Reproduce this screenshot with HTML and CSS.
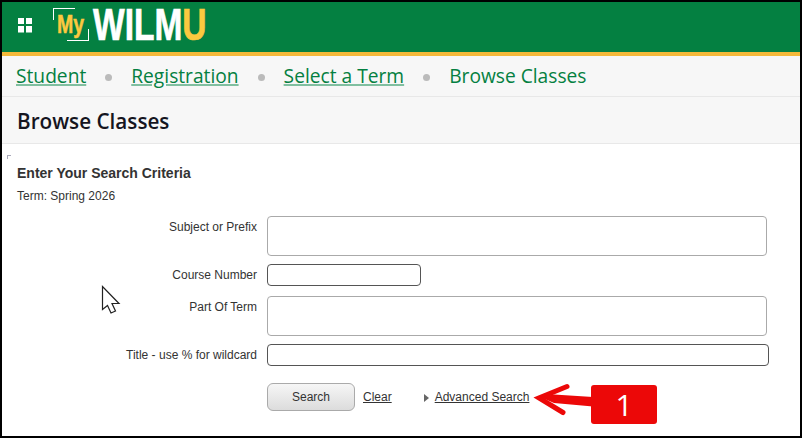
FILE: index.html
```html
<!DOCTYPE html>
<html lang="en">
<head>
<meta charset="utf-8">
<title>Browse Classes</title>
<link rel="stylesheet" href="styles.css">
</head>
<body>
<div class="frame">
  <header class="topbar">
    <svg class="grid-icon" width="14" height="15" viewBox="0 0 14 15" aria-hidden="true">
      <rect x="0" y="0" width="6" height="6" fill="#fff"/><rect x="8" y="0" width="6" height="6" fill="#fff"/>
      <rect x="0" y="8" width="6" height="6.5" fill="#fff"/><rect x="8" y="8" width="6" height="6.5" fill="#fff"/>
    </svg>
    <div class="logo">
      <div class="logo-my">
        <span class="corner corner-tl"></span>
        <span class="my">My</span>
        <span class="corner corner-br"></span>
      </div>
      <div class="wordmark"><span class="wilm">WILM</span><span class="u">U</span></div>
    </div>
  </header>
  <nav class="crumbs">
    <a href="#">Student</a><i class="dot"></i>
    <a href="#">Registration</a><i class="dot"></i>
    <a href="#">Select a Term</a><i class="dot"></i>
    <span>Browse Classes</span>
  </nav>
  <div class="titlebar"><h1>Browse Classes</h1></div>
  <main class="content">
    <span class="tick"></span>
    <h2>Enter Your Search Criteria</h2>
    <p class="term">Term: Spring 2026</p>
    <form class="form">
      <label class="lbl">Subject or Prefix</label>
      <div class="box box-subject"></div>
      <label class="lbl">Course Number</label>
      <input class="inp inp-course" type="text">
      <label class="lbl">Part Of Term</label>
      <div class="box box-part"></div>
      <label class="lbl">Title - use % for wildcard</label>
      <input class="inp inp-title" type="text">
      <div class="actions">
        <button class="btn" type="button">Search</button>
        <a class="link clear" href="#">Clear</a>
        <i class="tri"></i>
        <a class="link" href="#">Advanced Search</a>
      </div>
    </form>
  </main>
  <svg class="cursor" width="20" height="30" viewBox="0 0 20 30" aria-hidden="true">
    <path d="M1.5 1.5V24.5L6.5 20.5L10 28L14.5 26L11 18.5H18Z" fill="#fff" stroke="#222" stroke-width="1.2" stroke-linejoin="miter"/>
  </svg>
  <svg class="arrow" width="64" height="40" viewBox="0 0 64 40" aria-hidden="true">
    <path d="M35 5.5L7 17L31 31.5" fill="none" stroke="#ec0808" stroke-width="5" stroke-linecap="round" stroke-linejoin="miter"/>
    <path d="M8 16L22 13.5L61 16V25.5L22 22Z" fill="#ec0808"/>
  </svg>
  <div class="badge">1</div>
</div>
</body>
</html>
```
FILE: styles.css
```css
* { box-sizing: border-box; }
html, body { margin: 0; padding: 0; background: #fff; }
.frame {
  position: relative;
  width: 802px;
  height: 438px;
  border: 2px solid #000;
  overflow: hidden;
  background: #fff;
}
.topbar {
  height: 54px;
  background: #048041;
  border-bottom: 4px solid #f5b93a;
  display: flex;
  align-items: center;
  padding-left: 16px;
}
.grid-icon { margin-bottom: 4px; flex: none; }
.logo { display: flex; align-items: flex-start; margin-left: 21px; height: 50px; }
.logo-my { position: relative; width: 36px; height: 33px; margin: 6px 4px 0 0; flex: none; }
.my {
  position: absolute; left: 4px; top: 3px;
  font: bold 25px/26px "Liberation Sans", sans-serif;
  color: #fcc93f;
  -webkit-text-stroke: .5px #fcc93f;
  transform: scaleX(.78);
  transform-origin: left top;
}
.corner { position: absolute; width: 22px; height: 12px; }
.corner-tl { left: 0; top: 0; border-left: 1px solid #fff; border-top: 1px solid #fff; }
.corner-br { right: 0; bottom: 0; border-right: 1px solid #fff; border-bottom: 1px solid #fff; }
.wordmark {
  font: bold 45px/46px "Liberation Sans", sans-serif;
  color: #fff;
  white-space: nowrap;
  transform: scaleX(.745);
  transform-origin: left top;
}
.wilm { -webkit-text-stroke: .7px #fff; }
.u { color: #fcc93f; -webkit-text-stroke: .7px #fcc93f; }
.crumbs {
  height: 41px;
  background: #f7f7f7;
  border-bottom: 1px solid #e8e8e8;
  display: flex;
  align-items: center;
  padding-left: 14px;
  font: 19.2px/28px "Open Sans", sans-serif;
  color: #048041;
}
.crumbs a {
  color: #048041;
  text-decoration: underline;
  text-decoration-color: #80bfa0;
  text-decoration-thickness: 2px;
  text-underline-offset: 1px;
}
.dot { width: 7px; height: 7px; border-radius: 50%; background: #bbb; margin: 2px 19px 0 19px; flex: none; }
.titlebar {
  height: 47px;
  background: #f7f7f7;
  border-bottom: 1px solid #e8e8e8;
  display: flex;
  align-items: center;
  padding-left: 15px;
}
h1 { margin: 2px 0 0; font: 600 20.7px/28px "Open Sans", sans-serif; color: #15151f; }
.content {
  position: relative;
  padding: 20px 0 0 15px;
  font: 12px/14px "Liberation Sans", Arial, sans-serif;
  color: #333;
}
.tick {
  position: absolute; left: 5px; top: 11px;
  width: 4px; height: 4px;
  border-left: 1px solid #aab; border-top: 1px solid #aab;
}
h2 { margin: 0; font: bold 14px/18px "Liberation Sans", Arial, sans-serif; color: #333; }
.term { margin: 6px 0 0; line-height: 16px; }
.form {
  display: grid;
  grid-template-columns: 240px auto;
  justify-content: start;
  column-gap: 10px;
  margin-top: 12px;
}
.lbl { text-align: right; padding-top: 4px; }
.box { height: 40px; width: 500px; border: 1px solid #aaa; border-radius: 4px; background: #fff; margin-bottom: 8px; }
.inp { display: block; height: 22px; border: 1px solid #555; border-radius: 4px; padding: 0; background: #fff; }
.inp-course { width: 154px; margin-bottom: 10px; }
.inp-title { width: 502px; margin-bottom: 17px; }
.actions { grid-column: 2; display: flex; align-items: center; height: 28px; }
.btn {
  width: 88px; height: 28px;
  border: 1px solid #aaa; border-radius: 6px;
  background: linear-gradient(#f6f6f6, #dcdcdc);
  font: 12px "Liberation Sans", Arial, sans-serif;
  color: #333;
  padding: 0;
}
.link { color: #333; text-decoration: underline; }
.clear { margin-left: 8px; }
.tri {
  width: 0; height: 0; margin: 1px 6px 0 32px;
  border-left: 5px solid #666;
  border-top: 4px solid transparent;
  border-bottom: 4px solid transparent;
}
.cursor { position: absolute; left: 99px; top: 283px; }
.arrow { position: absolute; left: 530px; top: 379px; }
.badge {
  position: absolute; left: 589px; top: 383px;
  width: 66px; height: 39px;
  background: #ec0808;
  border-radius: 3px;
  color: #fff;
  font: 30px/39px "Open Sans", sans-serif;
  text-align: center;
}
```
